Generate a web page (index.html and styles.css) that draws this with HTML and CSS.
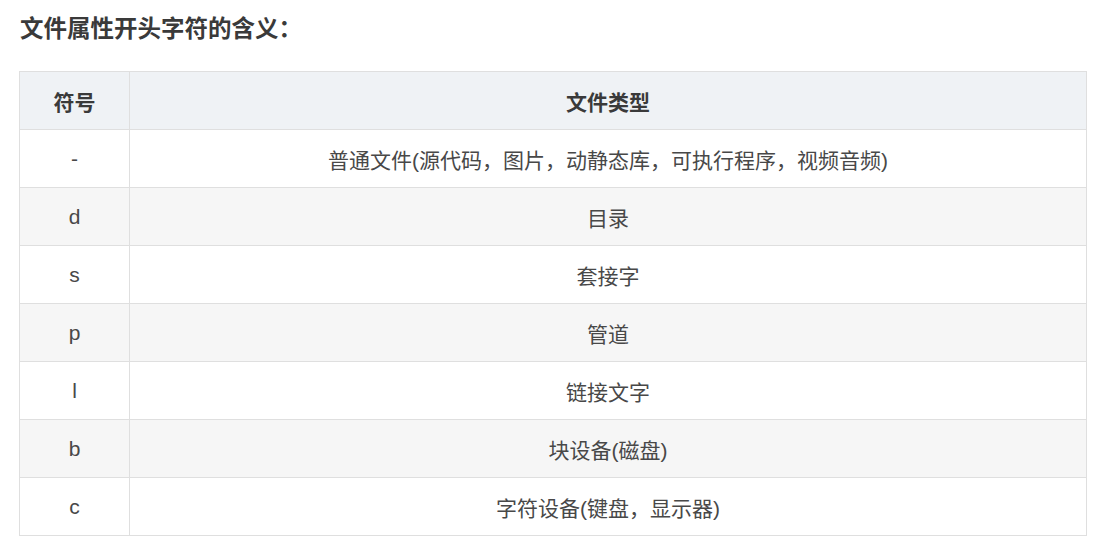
FILE: index.html
```html
<!DOCTYPE html>
<html lang="zh-CN">
<head>
<meta charset="utf-8">
<link rel="stylesheet" href="styles.css">
</head>
<body>
<div class="page">
  <h3 class="title">文件属性开头字符的含义：</h3>
  <table class="tbl">
    <thead>
      <tr><th class="c1">符号</th><th>文件类型</th></tr>
    </thead>
    <tbody>
      <tr><td>-</td><td>普通文件(源代码，图片，动静态库，可执行程序，视频音频)</td></tr>
      <tr><td>d</td><td>目录</td></tr>
      <tr><td>s</td><td>套接字</td></tr>
      <tr><td>p</td><td>管道</td></tr>
      <tr><td>l</td><td>链接文字</td></tr>
      <tr><td>b</td><td>块设备(磁盘)</td></tr>
      <tr><td>c</td><td>字符设备(键盘，显示器)</td></tr>
    </tbody>
  </table>
</div>
</body>
</html>
```
FILE: styles.css
```css
html, body {
  margin: 0;
  padding: 0;
  background: #fff;
}
body {
  font-family: "Liberation Sans", "Noto Sans CJK SC", sans-serif;
  color: #444;
}
.page {
  padding: 12px 22px 0 19px;
}
.title {
  margin: 0 0 25px 1px;
  font-size: 23.5px;
  line-height: 34px;
  font-weight: bold;
  color: #3a3a3a;
}
.tbl {
  border-collapse: collapse;
  width: 1068px;
  font-size: 21px;
}
.tbl th, .tbl td {
  border: 1px solid #dfdfdf;
  height: 58px;
  padding: 0 10px;
  text-align: center;
  vertical-align: middle;
  box-sizing: border-box;
}
.tbl th {
  background: #eff2f5;
  font-weight: bold;
  color: #3a3a3a;
}
.tbl .c1 {
  width: 110px;
}
.tbl td {
  color: #484848;
}
.tbl tbody tr:nth-child(even) td {
  background: #f6f6f6;
}
```
